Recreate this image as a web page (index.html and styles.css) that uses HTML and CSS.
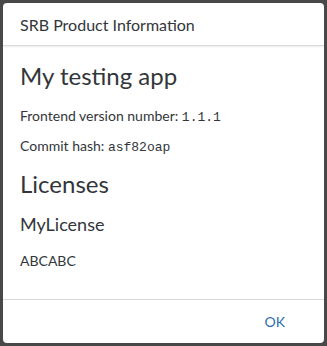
FILE: index.html
```html
<!DOCTYPE html>
<html>
<head>
<meta charset="utf-8">
<link rel="stylesheet" href="styles.css">
</head>
<body>
<div class="dialog">
  <header class="dlg-header">SRB Product Information</header>
  <main class="dlg-content">
    <h1 class="title">My testing app</h1>
    <p class="line first">Frontend version number: <span class="mono">1.1.1</span></p>
    <p class="line second">Commit hash: <span class="mono">asf82oap</span></p>
    <h2 class="title lic">Licenses</h2>
    <h3 class="subtitle">MyLicense</h3>
    <p class="line last">ABCABC</p>
  </main>
  <footer class="dlg-footer">
    <button class="ok">OK</button>
  </footer>
</div>
</body>
</html>
```
FILE: styles.css
```css
html, body { margin: 0; padding: 0; }
body {
  background: #484848;
  width: 327px;
  height: 346px;
  padding: 3px;
  box-sizing: border-box;
  font-family: Lato, "Liberation Sans", sans-serif;
  color: #32363a;
}
.dialog {
  background: #fff;
  border-radius: 4px;
  height: 340px;
  display: flex;
  flex-direction: column;
  overflow: hidden;
}
.dlg-header {
  height: 42px;
  border-bottom: 1px solid #d9d9d9;
  box-shadow: 0 1px 2px rgba(0,0,0,0.08);
  display: flex;
  align-items: center;
  padding: 0 17px;
  font-size: 16px;
  color: #32363a;
}
.dlg-content {
  flex: 1;
  padding: 0 17px;
}
.title {
  font-size: 24px;
  font-weight: 400;
  margin: 14px 0 0;
  line-height: 32px;
}
.title.lic { margin-top: 10px; }
.subtitle {
  font-size: 18px;
  font-weight: 400;
  margin: 12px 0 0;
  line-height: 24px;
}
.line {
  font-size: 14px;
  margin: 10px 0 0;
  line-height: 21px;
}
.line.first { margin-top: 13px; }
.line.second { margin-top: 7px; }
.line.last { margin-top: 14px; }
.mono { font-family: "Liberation Mono", monospace; font-size: 13px; }
.dlg-footer {
  height: 43px;
  border-top: 1px solid #d9d9d9;
  display: flex;
  align-items: center;
  justify-content: flex-end;
  padding: 0 39px;
}
.ok {
  background: none;
  border: 0;
  padding: 0;
  font-family: Lato, "Liberation Sans", sans-serif;
  font-size: 14px;
  color: #2b6cb2;
}
```
